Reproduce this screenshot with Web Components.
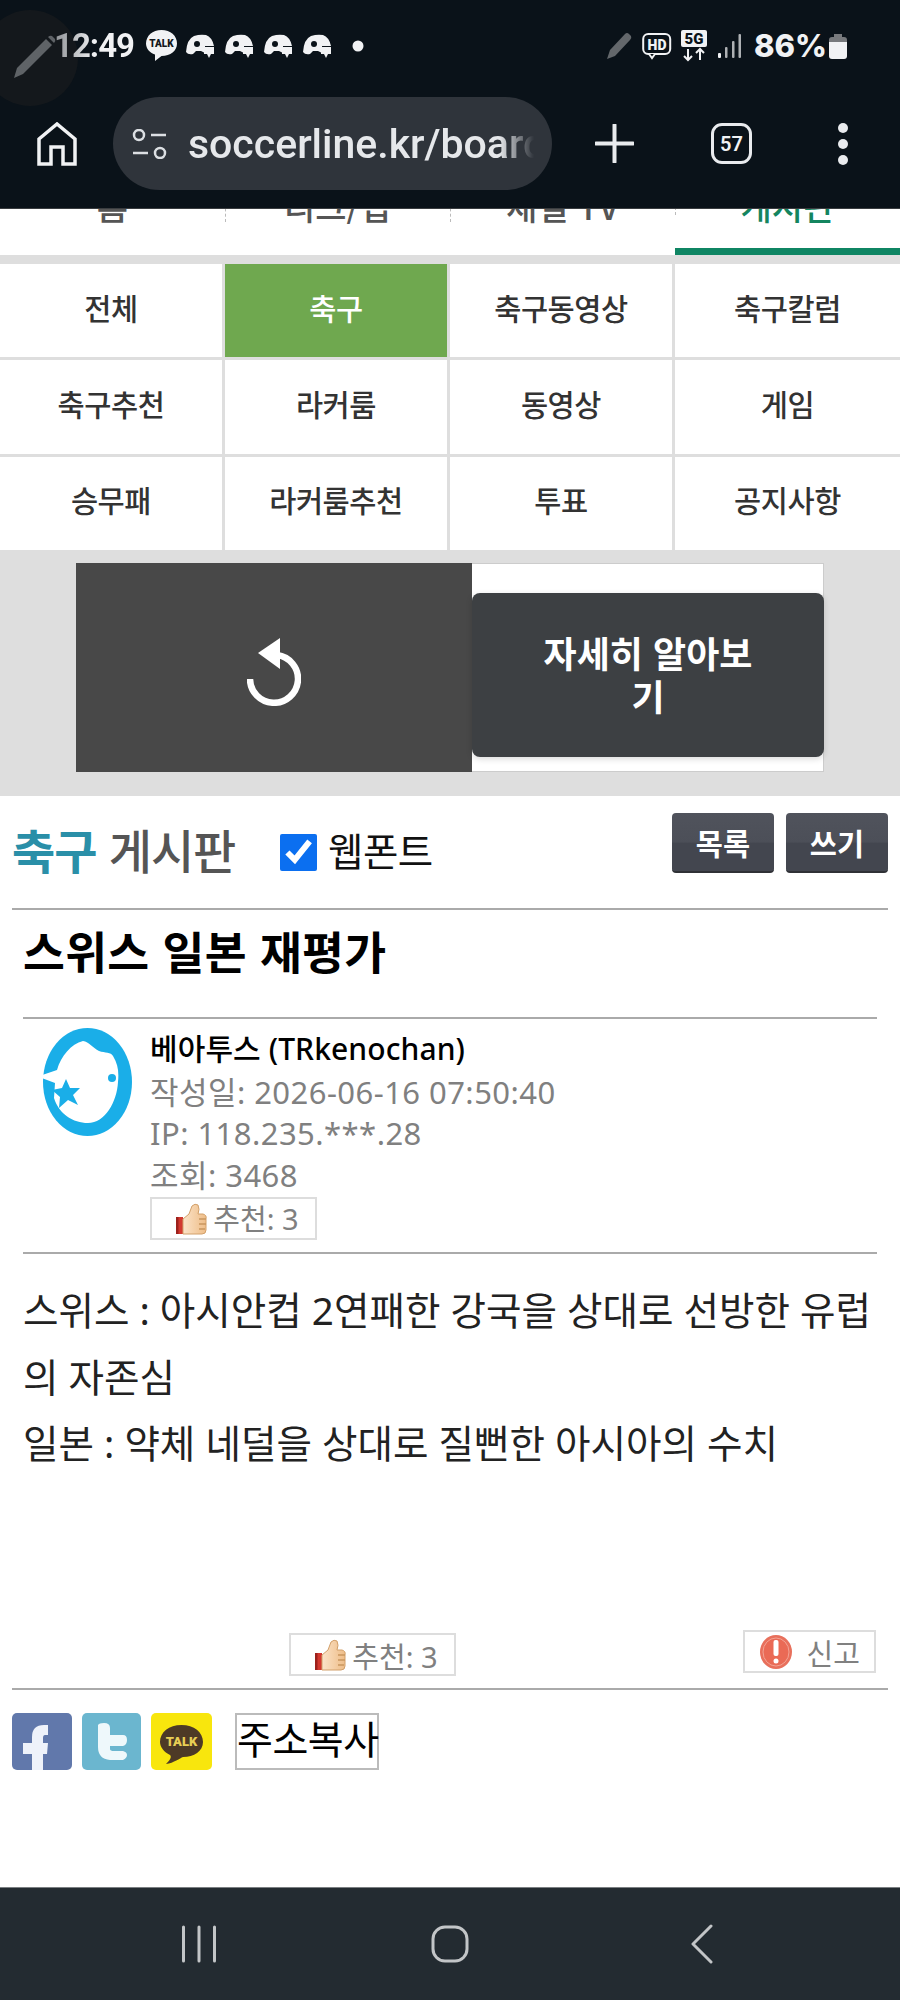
<!DOCTYPE html>
<html lang="ko">
<head>
<meta charset="utf-8">
<title>soccerline</title>
<style>
  html, body { margin: 0; padding: 0; background: #fff; }
  body { font-family: "Noto Sans CJK KR", "Noto Sans", sans-serif; }
</style>
</head>
<body>
<phone-frame>
  <browser-chrome slot="top"></browser-chrome>
  <tab-strip></tab-strip>
  <board-menu></board-menu>
  <ad-banner></ad-banner>
  <board-head></board-head>
  <post-view></post-view>
  <nav-bar slot="bottom"></nav-bar>
</phone-frame>

<script>
const KR = '"Noto Sans CJK KR", "Noto Sans", sans-serif';
// latin and digits come from Noto Sans here, its colon sits on the baseline
const MIXED = '"Noto Sans", "Noto Sans CJK KR", sans-serif';

// reusable bits of svg
const thumbSvg = `
<svg width="31" height="32" viewBox="0 0 31 32" style="display:block">
  <defs><linearGradient id="th" x1="0" x2="1"><stop offset="0" stop-color="#fbe3c8"/><stop offset="1" stop-color="#eebd88"/></linearGradient></defs>
  <rect x="0" y="14" width="7" height="17" fill="#d2382f"/>
  <rect x="0" y="14" width="2.500" height="17" fill="#9c211c"/>
  <path d="M7 16 L13 11 L16 3 Q19 0 22 2 Q24 6 22 11 L27 11 Q31 12 30 16 L30 27 Q30 31 26 31 L7 31 Z" fill="url(#th)" stroke="#d2a06a" stroke-width="1"/>
  <path d="M23 16h7M23 21h7M23 26h6" stroke="#c9975f" stroke-width="1.500"/>
</svg>`;

const discordSvg = `
<svg width="29" height="24" viewBox="0 0 29 24"><path d="M0 18 Q1 5 8 2 Q14 0 20 1 Q26 3 28 12 L19 12 L19 19 L15 17 L10 17 L7 20 Q2 21 0 18Z" fill="#f1f2f4"/><circle cx="11" cy="10" r="3" fill="#0a1219"/><path d="M18 13h10v7h-3l-2 4-2-4h-3z" fill="#f1f2f4"/></svg>`;

class PhoneFrame extends HTMLElement {
  constructor() {
    super();
    this.attachShadow({ mode: 'open' }).innerHTML = `
    <style>
      :host { display: flex; flex-direction: column; width: 900px; height: 2000px; overflow: hidden; background: #fff; }
      main { flex: 1; min-height: 0; overflow: hidden; display: flex; flex-direction: column; }
    </style>
    <slot name="top"></slot>
    <main><slot></slot></main>
    <slot name="bottom"></slot>`;
  }
}

class BrowserChrome extends HTMLElement {
  constructor() {
    super();
    this.attachShadow({ mode: 'open' }).innerHTML = `
    <style>
      :host { display: block; position: relative; height: 209px; background: #0a1219; color: #f1f2f4; border-bottom: 1px solid #3a3d40; box-sizing: border-box; font-family: Roboto, sans-serif; }
      .pen-bubble { position: absolute; left: -18px; top: 10px; width: 96px; height: 96px; border-radius: 50%; background: #14181c; }
      .pen-bubble svg { position: absolute; left: 31px; top: 24px; }
      .status { display: flex; align-items: center; height: 96px; padding: 0 53px 0 54px; box-sizing: border-box; position: relative; }
      .time { font-size: 33px; font-weight: 700; letter-spacing: -1px; width: 91px; margin-top: -6px; background: linear-gradient(90deg, #8d9094 0, #f1f2f4 45%); -webkit-background-clip: text; background-clip: text; color: transparent; }
      .left { display: flex; align-items: center; gap: 10px; margin-top: -5px; }
      .left .talk { margin-right: -2px; }
      .spacer { flex: 1; }
      .right { display: flex; align-items: center; margin-top: -5px; }
      .pct { font-family: Inter, sans-serif; font-size: 31px; font-weight: 800; letter-spacing: 0; margin-left: 12px; margin-top: -1px; }
      .tools { display: flex; align-items: center; height: 97px; position: relative; margin-top: -1px; }
      .home { width: 113px; display: flex; justify-content: center; }
      .pill { width: 439px; height: 93px; border-radius: 47px; background: #2f343b; display: flex; align-items: center; padding-left: 19px; box-sizing: border-box; gap: 20px; flex: none; }
      .url { font-family: Roboto, sans-serif; font-size: 41px; font-weight: 500; color: #e6e8eb; width: 346px; white-space: nowrap; overflow: hidden;
             -webkit-mask-image: linear-gradient(90deg, #000 90%, transparent 100%); mask-image: linear-gradient(90deg, #000 90%, transparent 100%); }
      .plus { margin-left: 43px; }
      .tabs { margin-left: 77px; width: 41px; height: 41px; border: 3.500px solid #e9ebee; border-radius: 11px; box-sizing: border-box; display: flex; align-items: center; justify-content: center; font-family: Roboto, sans-serif; font-size: 20px; font-weight: 600; }
      .dots { margin-left: 85px; }
    </style>
    <div class="pen-bubble">
      <svg width="44" height="45" viewBox="0 0 44 45"><path d="M1 44 L4 34 L33 5 L39 11 L10 40 Z" fill="#5f6367"/><path d="M35 3 Q37 1 39 2 L42 5 Q43 7 41 9 Z" fill="#5f6367"/></svg>
    </div>
    <div class="status">
      <span class="time">12:49</span>
      <div class="left">
        <svg class="talk" width="33" height="33" viewBox="0 0 33 33"><path d="M16.500 1C25.500 1 32 6.800 32 14.500 32 22 25.500 27 16.500 27 L10 32 10 25.500 C4.500 23.500 1 19.500 1 14.500 1 6.800 7.500 1 16.500 1Z" fill="#f1f2f4"/><text x="16.500" y="18" font-family="Roboto, sans-serif" font-size="10" font-weight="900" fill="#14181c" text-anchor="middle">TALK</text></svg>
        ${discordSvg}${discordSvg}${discordSvg}${discordSvg}
        <svg width="12" height="12" style="margin-left:10px"><circle cx="6" cy="6" r="5.500" fill="#f1f2f4"/></svg>
      </div>
      <div class="spacer"></div>
      <div class="right">
        <svg width="26" height="28" viewBox="0 0 26 28"><path d="M1 27 L4 18 L19 2 Q21 0 23 2 L25 4 Q26 6 24 8 L9 24 Z" fill="#63676b"/></svg>
        <svg style="margin-left:10px" width="30" height="28" viewBox="0 0 30 28"><rect x="1.200" y="2" width="27" height="20" rx="5" fill="none" stroke="#f1f2f4" stroke-width="2"/><path d="M7 22 l3 4 3-4" fill="#0a1219" stroke="#f1f2f4" stroke-width="2"/><text x="15" y="17.500" font-family="Roboto, sans-serif" font-size="14" font-weight="900" fill="#f1f2f4" text-anchor="middle">HD</text></svg>
        <svg style="margin-left:9px" width="26" height="32" viewBox="0 0 26 32"><rect x="0" y="0" width="26" height="17" rx="2" fill="#f1f2f4"/><text x="13" y="14" font-family="Roboto, sans-serif" font-size="15" font-weight="900" fill="#0a1219" text-anchor="middle">5G</text><path d="M7 19v11M3 26l4 4 4-4M19 30V19M15 23l4-4 4 4" fill="none" stroke="#f1f2f4" stroke-width="2"/></svg>
        <svg style="margin-left:11px" width="24" height="26" viewBox="0 0 24 26"><rect x="0" y="20" width="3" height="5" rx="1" fill="#f1f2f4"/><rect x="7" y="14" width="2.500" height="11" rx="1" fill="#aeb1b4"/><rect x="14" y="8" width="2.500" height="17" rx="1" fill="#aeb1b4"/><rect x="20.500" y="1" width="2.500" height="24" rx="1" fill="#aeb1b4"/></svg>
        <span class="pct">86%</span>
        <svg style="margin-left:2px" width="18" height="26" viewBox="0 0 18 26"><path d="M5 1h8v3H5z" fill="#77797c"/><path d="M3 4h12q3 0 3 3v2H0V7q0-3 3-3z" fill="#77797c"/><path d="M0 9h18v14q0 3-3 3H3q-3 0-3-3z" fill="#f1f2f4"/></svg>
      </div>
    </div>
    <div class="tools">
      <div class="home"><svg width="40" height="44" viewBox="0 0 40 44"><path d="M2 42V17L20 2 38 17V42H26V25H14V42Z" fill="none" stroke="#f1f2f4" stroke-width="3.500" stroke-linejoin="miter"/></svg></div>
      <div class="pill">
        <svg width="36" height="30" viewBox="0 0 36 30"><circle cx="7" cy="6" r="5" fill="none" stroke="#dcdfe3" stroke-width="2.500"/><path d="M19 6h15M1 24h15" stroke="#dcdfe3" stroke-width="2.500"/><circle cx="28" cy="24" r="5" fill="none" stroke="#dcdfe3" stroke-width="2.500"/></svg>
        <span class="url">soccerline.kr/board</span>
      </div>
      <svg class="plus" width="39" height="39" viewBox="0 0 39 39"><path d="M19.500 1v37M1 19.500h37" stroke="#e9ebee" stroke-width="4" stroke-linecap="round"/></svg>
      <div class="tabs">57</div>
      <svg class="dots" width="12" height="44" viewBox="0 0 12 44"><circle cx="6" cy="6" r="5" fill="#e9ebee"/><circle cx="6" cy="22" r="5" fill="#e9ebee"/><circle cx="6" cy="38" r="5" fill="#e9ebee"/></svg>
    </div>`;
  }
}

// scrolled away tab row, only the lower part of the labels shows
class TabStrip extends HTMLElement {
  constructor() {
    super();
    const labels = ['홈', '리그/팁', '채널 TV', '게시판'];
    this.attachShadow({ mode: 'open' }).innerHTML = `
    <style>
      :host { display: flex; height: 46px; overflow: hidden; background: #fff; flex: none; font-family: ${KR}; }
      div { flex: 1; position: relative; text-align: center; font-size: 34px; font-weight: 500; color: #555; line-height: 40px; margin-top: -27px; padding-top: 4px; height: 73px; box-sizing: border-box; white-space: nowrap; }
      div + div::before { content: ''; position: absolute; left: 0; top: 0; bottom: 33px; border-left: 1px dashed #bbb; }
      .on { color: #14855f; border-bottom: 7px solid #0f8563; }
    </style>
    ${labels.map((t, i) => `<div class="${i === 3 ? 'on' : ''}">${t}</div>`).join('')}`;
  }
}

class BoardMenu extends HTMLElement {
  constructor() {
    super();
    const items = ['전체', '축구', '축구동영상', '축구칼럼', '축구추천', '라커룸', '동영상', '게임', '승무패', '라커룸추천', '투표', '공지사항'];
    this.attachShadow({ mode: 'open' }).innerHTML = `
    <style>
      :host { display: grid; flex: none; grid-template-columns: 222px 222px 222px 1fr; grid-auto-rows: 1fr; gap: 3px; height: 295px; padding: 9px 0 0; box-sizing: border-box; background: #dedede; font-family: ${KR}; }
      a { background: #fff; display: flex; align-items: center; justify-content: center; padding-bottom: 8px; box-sizing: border-box; font-size: 29.500px; font-weight: 500; color: #333; letter-spacing: -.4px; }
      a.on { background: #6fa84f; color: #fff; }
    </style>
    ${items.map((t, i) => `<a class="${i === 1 ? 'on' : ''}">${t}</a>`).join('')}`;
  }
}

class AdBanner extends HTMLElement {
  constructor() {
    super();
    this.attachShadow({ mode: 'open' }).innerHTML = `
    <style>
      :host { display: block; flex: none; background: #dedede; padding: 13px 76px 24px; height: 246px; box-sizing: border-box; font-family: ${KR}; }
      .box { display: flex; height: 209px; background: #fff; box-shadow: 0 0 0 1px #ccc inset; }
      .replay { width: 396px; background: #484848; display: flex; align-items: center; justify-content: center; padding-top: 8px; box-sizing: border-box; }
      .side { flex: 1; display: flex; align-items: center; }
      .cta { width: 100%; height: 164px; margin-top: 15px; background: #3d4043; border-radius: 8px; box-shadow: 0 2px 6px rgba(0,0,0,.15); color: #fff; font-size: 36px; font-weight: 700; line-height: 43px; padding: 0 60px 3px; text-align: center; display: flex; align-items: center; justify-content: center; box-sizing: border-box; }
    </style>
    <div class="box">
      <div class="replay">
        <svg width="54" height="68" viewBox="0 0 54 68"><path d="M30 17 A 24 24 0 1 1 3 41" fill="none" stroke="#fff" stroke-width="6.500"/><path d="M11 15 L33 0 L33 31 Z" fill="#fff"/></svg>
      </div>
      <div class="side"><div class="cta">자세히 알아보기</div></div>
    </div>`;
  }
}

class BoardHead extends HTMLElement {
  constructor() {
    super();
    this.attachShadow({ mode: 'open' }).innerHTML = `
    <style>
      :host { display: flex; flex: none; align-items: flex-start; margin: 0 12px; height: 114px; padding-top: 17px; box-sizing: border-box; border-bottom: 2px solid #aaa; font-family: ${KR}; }
      h2 { margin: 6px 0 0; font-size: 47px; font-weight: 500; line-height: 60px; color: #555; letter-spacing: -1px; width: 268px; white-space: nowrap; }
      h2 b { color: #2a8fa8; font-weight: 700; }
      label { display: flex; align-items: center; font-size: 38.500px; color: #111; height: 60px; margin-top: 6px; flex: 1; letter-spacing: -.5px; }
      input { width: 37px; height: 37px; margin: 7px 11px 0 0; accent-color: #0b6ff0; }
      .btn { width: 102px; height: 60px; margin-left: 12px; box-sizing: border-box; background: linear-gradient(#50535c 0, #4c4f58 50%, #43464f 52%, #43464f 100%); border-radius: 4px; border-bottom: 2px solid #2f3136; color: #fff; font-size: 29.500px; font-weight: 700; display: flex; align-items: center; justify-content: center; }
    </style>
    <h2><b>축구</b> 게시판</h2>
    <label><input type="checkbox" checked>웹폰트</label>
    <span class="btn">목록</span><span class="btn">쓰기</span>`;
  }
}

class VoteBox extends HTMLElement {
  constructor() {
    super();
    this.attachShadow({ mode: 'open' }).innerHTML = `
    <style>
      :host { display: inline-flex; align-items: center; justify-content: center; gap: 6px; box-sizing: border-box; width: 167px; height: 43px; padding-left: 8px; border: 2px solid #ddd; font-size: 29px; color: #808080; font-family: ${MIXED}; }
    </style>
    <slot name="icon"></slot><slot></slot>`;
  }
}

class PostView extends HTMLElement {
  constructor() {
    super();
    this.attachShadow({ mode: 'open' }).innerHTML = `
    <style>
      :host { display: block; flex: none; font-family: ${KR}; }
      h1 { margin: 0 23px; height: 109px; padding-top: 6px; box-sizing: border-box; font-size: 45.500px; font-weight: 700; line-height: 68px; color: #000; border-bottom: 2px solid #aaa; letter-spacing: .3px; }
      .meta { margin: 0 23px; display: flex; border-bottom: 2px solid #aaa; height: 235px; box-sizing: border-box; }
      .avatar { width: 127px; flex: none; padding: 9px 0 0 20px; box-sizing: border-box; }
      .info { font-family: ${MIXED}; font-size: 31px; line-height: 41.500px; color: #808080; padding-top: 9px; letter-spacing: .45px; }
      .name { color: #000; font-weight: 500; letter-spacing: .1px; font-size: 30px; margin-bottom: 2px; }
      .info vote-box { display: flex; margin-top: 1px; letter-spacing: 0; }
      .body { font-family: ${MIXED}; margin: 23px 12px 0 23px; font-size: 38.600px; line-height: 66.500px; color: #222; height: 353px; }
      .rate { display: flex; justify-content: space-between; align-items: flex-start; padding: 0 24px 0 289px; box-sizing: border-box; height: 58px; }
      .rate vote-box { margin-top: 3px; }
      .rate vote-box.report { width: 133px; margin-top: 0; padding-left: 0; }
      hr { border: 0; border-top: 2px solid #aaa; margin: 0 12px; }
      .share { display: flex; align-items: flex-start; gap: 10px; margin: 23px 12px 0; }
      .share svg { display: block; }
      .copy { margin-left: 13px; width: 144px; height: 57px; box-sizing: border-box; border: 2px solid #bbb; font-size: 39px; line-height: 44px; color: #000; text-align: center; white-space: nowrap; letter-spacing: -.5px; }
    </style>
    <h1>스위스 일본 재평가</h1>
    <div class="meta">
      <div class="avatar">
        <svg width="89" height="108" viewBox="0 0 89 108">
          <ellipse cx="44.500" cy="54" rx="44.500" ry="54" fill="#1aaee8"/>
          <path fill="#fff" d="M-1 47 L14 42 C18 28 28 16 40 13 C46 14 50 20 56 23 C62 25 68 24 70 28 C75 36 76 44 75 54 C74 74 62 95 45 95 C30 95 16 86 11 70 L12 55 L-1 50 Z"/>
          <path fill="#1aaee8" d="M23 51 L27 60 L37 60 L30 67 L35 77 L25 72 L16 80 L17 69 L9 62 L19 60Z"/>
          <circle cx="69" cy="50" r="4" fill="#1aaee8"/>
        </svg>
      </div>
      <div class="info">
        <div class="name">베아투스 (TRkenochan)</div>
        <div>작성일: 2026-06-16 07:50:40</div>
        <div>IP: 118.235.***.28</div>
        <div>조회: 3468</div>
        <vote-box><span slot="icon">${thumbSvg}</span>추천: 3</vote-box>
      </div>
    </div>
    <div class="body">스위스 : 아시안컵 2연패한 강국을 상대로 선방한 유럽의 자존심<br>일본 : 약체 네덜을 상대로 질뻔한 아시아의 수치</div>
    <div class="rate">
      <vote-box><span slot="icon">${thumbSvg}</span>추천: 3</vote-box>
      <vote-box class="report"><svg slot="icon" width="34" height="36" viewBox="0 0 34 36" style="display:block"><ellipse cx="17" cy="18" rx="16" ry="17" fill="#e8705c"/><ellipse cx="17" cy="18" rx="13" ry="14" fill="#ea6a55" stroke="#f3a394" stroke-width="1"/><rect x="14.500" y="6" width="5" height="16" rx="2" fill="#fff"/><circle cx="17" cy="27" r="2.500" fill="#fff"/></svg>&nbsp;신고</vote-box>
    </div>
    <hr>
    <div class="share">
      <svg width="60" height="57" viewBox="0 0 60 57"><rect width="60" height="57" rx="5" fill="#6178ab"/><path d="M20 57V41H11V30H20V24Q20 12 32 12H36V22H33Q31 22 31 25V30H36L35 41H31V57Z" fill="#eef2fa"/></svg>
      <svg width="59" height="57" viewBox="0 0 59 57"><rect width="59" height="57" rx="5" fill="#6bb6cf"/><path d="M16 12Q17 10 22 10 Q28 10 28 15V22H41Q45 22 45 27T41 33H28V36Q28 38 32 38H41Q45 39 45 42T41 47H28Q16 46 16 34Z" fill="#eef8fb"/></svg>
      <svg width="61" height="57" viewBox="0 0 61 57"><rect width="61" height="57" rx="5" fill="#f8e60d"/><path d="M30.500 12C43 12 52 19 52 29C52 38 43 44 32 44C29 45 23 50 15 51C19 47 21 44 19 42C13 39 9 34 9 29C9 19 18 12 30.500 12Z" fill="#4d3a26"/><text x="30.500" y="33" font-family="Roboto, sans-serif" font-size="13" font-weight="900" fill="#e8cf55" text-anchor="middle">TALK</text></svg>
      <div class="copy">주소복사</div>
    </div>`;
  }
}

class NavBar extends HTMLElement {
  constructor() {
    super();
    this.attachShadow({ mode: 'open' }).innerHTML = `
    <style>
      :host { display: block; flex: none; height: 113px; background: #232b31; border-top: 1px solid #7b7f82; box-sizing: border-box; }
      div { display: flex; height: 100%; align-items: center; }
      svg { display: block; flex: none; }
    </style>
    <div>
      <svg style="margin-left:181px" width="36" height="38" viewBox="0 0 36 38"><path d="M2.500 2v34M18 2v34M33.500 2v34" stroke="#c2c5c7" stroke-width="3" stroke-linecap="round"/></svg>
      <svg style="margin-left:214px" width="38" height="38" viewBox="0 0 38 38"><rect x="2" y="2" width="34" height="34" rx="12" fill="none" stroke="#c2c5c7" stroke-width="3"/></svg>
      <svg style="margin-left:221px" width="23" height="40" viewBox="0 0 23 40"><path d="M21 2L3 20 21 38" fill="none" stroke="#c2c5c7" stroke-width="3" stroke-linecap="round" stroke-linejoin="round"/></svg>
    </div>`;
  }
}

customElements.define('phone-frame', PhoneFrame);
customElements.define('browser-chrome', BrowserChrome);
customElements.define('tab-strip', TabStrip);
customElements.define('board-menu', BoardMenu);
customElements.define('ad-banner', AdBanner);
customElements.define('board-head', BoardHead);
customElements.define('vote-box', VoteBox);
customElements.define('post-view', PostView);
customElements.define('nav-bar', NavBar);
</script>
</body>
</html>
